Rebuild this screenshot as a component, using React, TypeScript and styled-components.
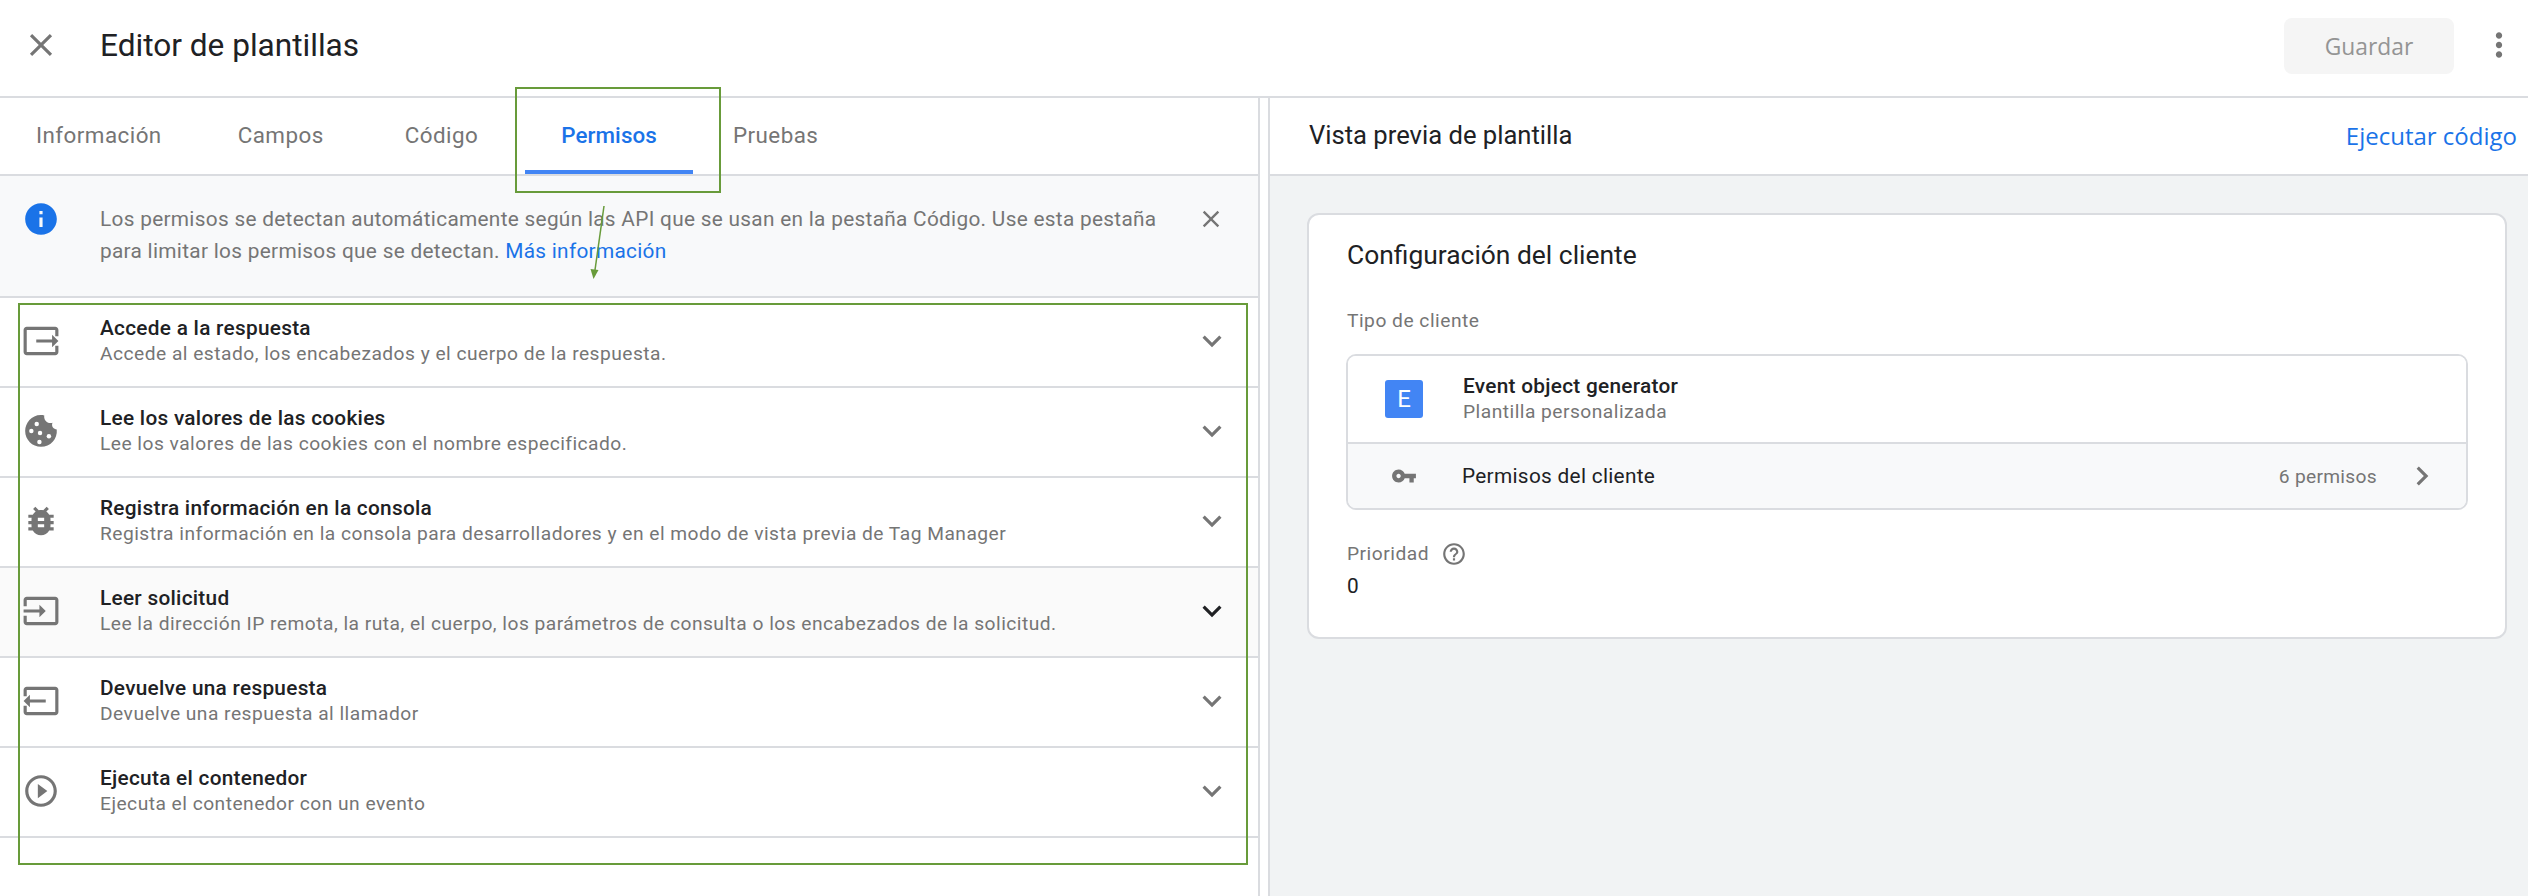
import React from 'react';
import styled, { createGlobalStyle } from 'styled-components';

const GlobalStyle = createGlobalStyle`
  html, body {
    margin: 0;
    padding: 0;
    background: #fff;
  }
  body {
    font-family: Roboto, "Liberation Sans", sans-serif;
    color: #202124;
  }
  * {
    box-sizing: border-box;
  }
`;

const line = '#dadce0';
const grey = '#757575';
const blue = '#1a73e8';

const Page = styled.div`
  position: relative;
  width: 2528px;
  height: 896px;
  overflow: hidden;
  display: flex;
  flex-direction: column;
`;

const TopBar = styled.header`
  height: 98px;
  flex: none;
  display: flex;
  align-items: center;
  padding: 0 10px 6px 22px;
  border-bottom: 2px solid ${line};
`;

const Title = styled.h1`
  flex: 1;
  margin: 0 0 0 40px;
  font-size: 31.6px;
  font-weight: 400;
  color: #202124;
`;

const SaveButton = styled.button`
  width: 170px;
  height: 56px;
  margin: 2px 26px 0 0;
  border: none;
  border-radius: 8px;
  background: #f5f5f5;
  color: #949494;
  font-family: "Open Sans", sans-serif;
  font-size: 22.8px;
  font-weight: 400;
`;

const Panels = styled.main`
  flex: 1;
  display: flex;
  min-height: 0;
`;

const LeftPanel = styled.section`
  width: 1260px;
  flex: none;
  border-right: 2px solid ${line};
`;

const RightPanel = styled.section`
  flex: 1;
  margin-left: 8px;
  border-left: 2px solid ${line};
  background: #f1f3f4;
  display: flex;
  flex-direction: column;
`;

const TabBar = styled.nav`
  height: 78px;
  display: flex;
  border-bottom: 2px solid ${line};
  background: #fff;
`;

const Tab = styled.div<{ $active?: boolean; $gap: number }>`
  position: relative;
  display: flex;
  align-items: center;
  margin-left: ${(p) => p.$gap}px;
  padding: 0 36px 2px;
  font-size: 22.4px;
  letter-spacing: ${(p) => (p.$active ? '0.1px' : '0.45px')};
  color: ${(p) => (p.$active ? blue : grey)};
  font-weight: ${(p) => (p.$active ? 500 : 400)};
  &::after {
    content: '';
    display: ${(p) => (p.$active ? 'block' : 'none')};
    position: absolute;
    left: 0;
    right: 0;
    bottom: 0;
    height: 4px;
    background: #4285f4;
  }
`;

const Banner = styled.div`
  height: 122px;
  display: flex;
  padding: 24px 33px 0 22px;
  background: #f8f9fa;
  border-bottom: 2px solid ${line};
`;

const BannerText = styled.p`
  flex: 1;
  margin: 3px 0 0 40px;
  font-size: 20.8px;
  line-height: 32px;
  letter-spacing: 0.3px;
  color: ${grey};
`;

const BannerClose = styled.div`
  margin-top: 5px;
`;

const Link = styled.a`
  color: ${blue};
`;

const Row = styled.div<{ $hover?: boolean }>`
  height: 90px;
  display: flex;
  align-items: center;
  padding: 0 27px 2px 22px;
  border-bottom: 2px solid ${line};
  background: ${(p) => (p.$hover ? '#fafafa' : '#fff')};
`;

const RowText = styled.div`
  flex: 1;
  margin-left: 40px;
`;

const RowTitle = styled.div`
  font-size: 20.8px;
  line-height: 26px;
  font-weight: 500;
  letter-spacing: 0.28px;
  color: #202124;
`;

const RowSub = styled.div`
  font-size: 19.2px;
  line-height: 26px;
  letter-spacing: 0.48px;
  color: ${grey};
`;

const PreviewBar = styled.div`
  height: 78px;
  flex: none;
  display: flex;
  align-items: center;
  justify-content: space-between;
  padding: 0 11px 2px 39px;
  background: #fff;
  border-bottom: 2px solid ${line};
`;

const PreviewTitle = styled.div`
  font-size: 25.6px;
  color: #202124;
`;

const RunLink = styled.a`
  font-family: "Open Sans", sans-serif;
  font-size: 24px;
  color: ${blue};
`;

const Card = styled.div`
  margin: 37px 21px 0 37px;
  height: 426px;
  padding: 23px 37px 0;
  background: #fff;
  border: 2px solid ${line};
  border-radius: 12px;
`;

const CardTitle = styled.h2`
  margin: 0 0 0 1px;
  font-size: 26.4px;
  line-height: 34px;
  font-weight: 400;
  color: #202124;
`;

const FieldLabel = styled.div`
  display: flex;
  align-items: center;
  gap: 12px;
  margin-left: 1px;
  font-size: 19.2px;
  line-height: 26px;
  letter-spacing: 0.5px;
  color: ${grey};
`;

const TypeLabel = styled(FieldLabel)`
  margin-top: 36px;
`;

const PriorityLabel = styled(FieldLabel)`
  margin-top: 31px;
`;

const PriorityValue = styled.div`
  margin: 6px 0 0 1px;
  font-size: 20.8px;
  line-height: 26px;
  color: #202124;
`;

const ClientBox = styled.div`
  margin-top: 20px;
  border: 2px solid ${line};
  border-radius: 10px;
  overflow: hidden;
`;

const ClientHead = styled.div`
  height: 88px;
  display: flex;
  align-items: center;
  padding: 0 0 0 37px;
  background: #fff;
  border-bottom: 2px solid ${line};
`;

const ClientBadge = styled.div`
  width: 38px;
  height: 38px;
  border-radius: 3px;
  display: flex;
  align-items: center;
  justify-content: center;
  background: #4285f4;
  color: #fff;
  font-size: 24px;
`;

const ClientText = styled.div`
  margin-left: 40px;
`;

const ClientPerms = styled.div`
  height: 64px;
  display: flex;
  align-items: center;
  padding: 0 25px 0 43px;
  background: #f8f9fa;
`;

const PermsLabel = styled.div`
  flex: 1;
  margin-left: 45px;
  font-size: 20.8px;
  letter-spacing: 0.3px;
  color: #202124;
`;

const PermsCount = styled.div`
  margin-right: 26px;
  font-size: 19.2px;
  letter-spacing: 0.3px;
  color: ${grey};
`;

const Svg = styled.svg<{ $size?: number; $color?: string }>`
  flex: none;
  display: block;
  width: ${(p) => p.$size ?? 38}px;
  height: ${(p) => p.$size ?? 38}px;
  fill: ${(p) => p.$color ?? grey};
`;

const Note = styled.div<{ $x: number; $y: number; $w: number; $h: number }>`
  position: absolute;
  left: ${(p) => p.$x}px;
  top: ${(p) => p.$y}px;
  width: ${(p) => p.$w}px;
  height: ${(p) => p.$h}px;
  border: 2px solid #689b3a;
  pointer-events: none;
`;

const NoteArrow = styled.svg`
  position: absolute;
  left: 580px;
  top: 200px;
  pointer-events: none;
`;

const paths = {
  close: 'M19 6.41L17.59 5 12 10.59 6.41 5 5 6.41 10.59 12 5 17.59 6.41 19 12 13.41 17.59 19 19 17.59 13.41 12z',
  info: 'M12 2C6.48 2 2 6.48 2 12s4.48 10 10 10 10-4.48 10-10S17.52 2 12 2zm1 15h-2v-6h2v6zm0-8h-2V7h2v2z',
  more: 'M16.59 8.59L12 13.17 7.41 8.59 6 10l6 6 6-6z',
  next: 'M10 6L8.59 7.41 13.17 12l-4.58 4.59L10 18l6-6z',
  dots: 'M12 8c1.1 0 2-.9 2-2s-.9-2-2-2-2 .9-2 2 .9 2 2 2zm0 2c-1.1 0-2 .9-2 2s.9 2 2 2 2-.9 2-2-.9-2-2-2zm0 6c-1.1 0-2 .9-2 2s.9 2 2 2 2-.9 2-2-.9-2-2-2z',
  output: 'M3 3.01c-1.1 0-2 .9-2 2v14c0 1.1.9 1.98 2 1.98h18c1.1 0 2-.88 2-1.98V15h-2v4.02H3V4.99h18V9h2V5.01c0-1.1-.9-2-2-2H3zM19 8l4 4-4 4v-3H9v-2h10z',
  input: 'M21 3.01H3c-1.1 0-2 .9-2 2V9h2V4.99h18v14.03H3V15H1v4.01c0 1.1.9 1.98 2 1.98h18c1.1 0 2-.88 2-1.98v-14c0-1.11-.9-2-2-2zM11 16l4-4-4-4v3H1v2h10v3z',
  back: 'M21 3.01H3c-1.1 0-2 .9-2 2V9h2V4.99h18v14.03H3V15H1v4.01c0 1.1.9 1.98 2 1.98h18c1.1 0 2-.88 2-1.98v-14c0-1.11-.9-2-2-2zM5 8l-4 4 4 4v-3h10v-2H5z',
  bug: 'M20 8h-2.81c-.45-.78-1.07-1.45-1.82-1.96L17 4.41 15.59 3l-2.17 2.17C12.96 5.06 12.49 5 12 5c-.49 0-.96.06-1.41.17L8.41 3 7 4.41l1.62 1.63C7.88 6.55 7.26 7.22 6.81 8H4v2h2.09c-.05.33-.09.66-.09 1v1H4v2h2v1c0 .34.04.67.09 1H4v2h2.81c1.04 1.79 2.97 3 5.19 3s4.15-1.21 5.19-3H20v-2h-2.09c.05-.33.09-.66.09-1v-1h2v-2h-2v-1c0-.34-.04-.67-.09-1H20V8zm-6 8h-4v-2h4v2zm0-4h-4v-2h4v2z',
  play: 'M10 16.5l6-4.5-6-4.5v9zM12 2C6.48 2 2 6.48 2 12s4.48 10 10 10 10-4.48 10-10S17.52 2 12 2zm0 18c-4.41 0-8-3.59-8-8s3.59-8 8-8 8 3.59 8 8-3.59 8-8 8z',
  key: 'M12.65 10C11.83 7.67 9.61 6 7 6c-3.31 0-6 2.69-6 6s2.69 6 6 6c2.61 0 4.83-1.67 5.65-4H17v4h4v-4h2v-4H12.65zM7 14c-1.1 0-2-.9-2-2s.9-2 2-2 2 .9 2 2-.9 2-2 2z',
  help: 'M11 18h2v-2h-2v2zm1-16C6.48 2 2 6.48 2 12s4.48 10 10 10 10-4.48 10-10S17.52 2 12 2zm0 18c-4.41 0-8-3.59-8-8s3.59-8 8-8 8 3.59 8 8-3.59 8-8 8zm0-14c-2.21 0-4 1.79-4 4h2c0-1.1.9-2 2-2s2 .9 2 2c0 2-3 1.75-3 5h2c0-2.25 3-2.5 3-5 0-2.21-1.79-4-4-4z',
  cookie: 'M21.95 10.99c-1.79-.03-3.7-1.95-2.68-4.22-2.98 1-5.77-1.59-5.19-4.56C6.95.71 2 6.58 2 12c0 5.52 4.48 10 10 10 5.89 0 10.54-5.08 9.95-11.01z',
};

const Icon = ({ d, size, color }: { d: string; size?: number; color?: string }) => (
  <Svg viewBox="0 0 24 24" $size={size} $color={color}>
    <path d={d} />
  </Svg>
);

const CookieIcon = () => (
  <Svg viewBox="0 0 24 24">
    <path d={paths.cookie} />
    <circle cx="5.9" cy="12" r="1.4" fill="#fff" />
    <circle cx="9.3" cy="7.6" r="1.4" fill="#fff" />
    <circle cx="11.4" cy="13.3" r="1.4" fill="#fff" />
    <circle cx="17" cy="15.3" r="1.4" fill="#fff" />
    <circle cx="11" cy="19" r="1.4" fill="#fff" />
  </Svg>
);

const rows = [
  { icon: <Icon d={paths.output} />, title: 'Accede a la respuesta', sub: 'Accede al estado, los encabezados y el cuerpo de la respuesta.' },
  { icon: <CookieIcon />, title: 'Lee los valores de las cookies', sub: 'Lee los valores de las cookies con el nombre especificado.' },
  { icon: <Icon d={paths.bug} />, title: 'Registra información en la consola', sub: 'Registra información en la consola para desarrolladores y en el modo de vista previa de Tag Manager' },
  { icon: <Icon d={paths.input} />, title: 'Leer solicitud', sub: 'Lee la dirección IP remota, la ruta, el cuerpo, los parámetros de consulta o los encabezados de la solicitud.', hover: true },
  { icon: <Icon d={paths.back} />, title: 'Devuelve una respuesta', sub: 'Devuelve una respuesta al llamador' },
  { icon: <Icon d={paths.play} />, title: 'Ejecuta el contenedor', sub: 'Ejecuta el contenedor con un evento' },
];

const tabs = [
  { label: 'Información', gap: 0 },
  { label: 'Campos', gap: 4 },
  { label: 'Código', gap: 9 },
  { label: 'Permisos', gap: 11 },
  { label: 'Pruebas', gap: 4 },
];

export default function App() {
  return (
    <Page>
      <GlobalStyle />
      <TopBar>
        <Icon d={paths.close} />
        <Title>Editor de plantillas</Title>
        <SaveButton>Guardar</SaveButton>
        <Icon d={paths.dots} />
      </TopBar>
      <Panels>
        <LeftPanel>
          <TabBar>
            {tabs.map((t) => (
              <Tab key={t.label} $gap={t.gap} $active={t.label === 'Permisos'}>{t.label}</Tab>
            ))}
          </TabBar>
          <Banner>
            <Icon d={paths.info} color={blue} />
            <BannerText>
              Los permisos se detectan automáticamente según las API que se usan en la pestaña Código. Use esta pestaña
              <br />
              para limitar los permisos que se detectan. <Link>Más información</Link>
            </BannerText>
            <BannerClose>
              <Icon d={paths.close} size={28} />
            </BannerClose>
          </Banner>
          {rows.map((r) => (
            <Row key={r.title} $hover={r.hover}>
              {r.icon}
              <RowText>
                <RowTitle>{r.title}</RowTitle>
                <RowSub>{r.sub}</RowSub>
              </RowText>
              <Icon d={paths.more} color={r.hover ? '#202124' : grey} />
            </Row>
          ))}
        </LeftPanel>
        <RightPanel>
          <PreviewBar>
            <PreviewTitle>Vista previa de plantilla</PreviewTitle>
            <RunLink>Ejecutar código</RunLink>
          </PreviewBar>
          <Card>
            <CardTitle>Configuración del cliente</CardTitle>
            <TypeLabel>Tipo de cliente</TypeLabel>
            <ClientBox>
              <ClientHead>
                <ClientBadge>E</ClientBadge>
                <ClientText>
                  <RowTitle>Event object generator</RowTitle>
                  <RowSub>Plantilla personalizada</RowSub>
                </ClientText>
              </ClientHead>
              <ClientPerms>
                <Icon d={paths.key} size={26} color="#757575" />
                <PermsLabel>Permisos del cliente</PermsLabel>
                <PermsCount>6 permisos</PermsCount>
                <Icon d={paths.next} />
              </ClientPerms>
            </ClientBox>
            <PriorityLabel>
              Prioridad
              <Icon d={paths.help} size={26} />
            </PriorityLabel>
            <PriorityValue>0</PriorityValue>
          </Card>
        </RightPanel>
      </Panels>
      <Note $x={515} $y={87} $w={206} $h={106} />
      <Note $x={18} $y={303} $w={1230} $h={562} />
      <NoteArrow width="40" height="90" viewBox="0 0 40 90">
        <line x1="24" y1="6" x2="15" y2="70" stroke="#689b3a" strokeWidth="1.5" />
        <polygon points="10.5,69 18.5,70 13.5,79" fill="#689b3a" />
      </NoteArrow>
    </Page>
  );
}
